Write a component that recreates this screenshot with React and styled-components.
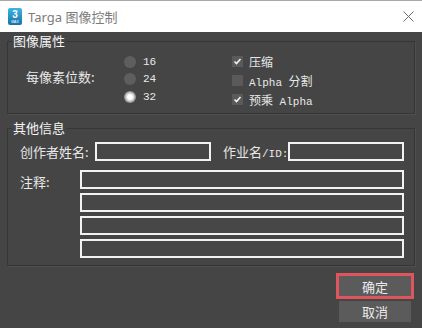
import React from 'react'
import styled, { createGlobalStyle } from 'styled-components'

const GlobalStyle = createGlobalStyle`
  html, body {
    margin: 0;
    padding: 0;
    background: #454545;
  }
  body {
    font-family: "Noto Sans CJK SC", "Noto Sans", sans-serif;
  }
`

const Window = styled.div`
  width: 422px;
  height: 328px;
  overflow: hidden;
  display: flex;
  flex-direction: column;
`

const TitleBar = styled.div`
  height: 32px;
  box-sizing: border-box;
  background: #fff;
  border-top: 1px solid #a8a8a8;
  display: flex;
  align-items: center;
  padding: 0 8px;
  gap: 6px;
`

const TitleText = styled.div`
  flex: 1;
  font-family: "Noto Sans", "Noto Sans CJK SC", sans-serif;
  font-size: 13px;
  color: #7c7c7c;
`

const Body = styled.div`
  flex: 1;
  background: #454545;
  padding: 1px 7px 0 7px;
  display: flex;
  flex-direction: column;
`

const Group = styled.fieldset`
  margin: ${p => p.$top || 0}px 0 0 0;
  padding: 0;
  min-width: 0;
  border: 1px solid #363636;
  box-shadow: 1px 1px 0 #4f4f4f;
`

const Legend = styled.legend`
  margin-left: 4px;
  padding: 0 1px;
  font-size: 13px;
  line-height: 16px;
  color: #f4f4f4;
`

const PropsGrid = styled.div`
  display: grid;
  grid-template-columns: 98px 108px 1fr;
  align-items: start;
  padding: 3px 0 4px 18px;
`

const Label = styled.div`
  font-size: 13px;
  color: #e8e8e8;
  white-space: nowrap;
  width: ${p => p.$w ? `${p.$w}px` : 'auto'};
  flex-shrink: 0;
`

const SideLabel = styled(Label)`
  align-self: center;
  padding-bottom: 8px;
`

const Column = styled.div`
  display: flex;
  flex-direction: column;
  padding-top: ${p => p.$top || 0}px;
`

const OptionRow = styled.div`
  height: ${p => p.$h}px;
  display: flex;
  align-items: center;
  gap: ${p => p.$gap}px;
  font-size: 12px;
  color: #e8e8e8;
`

const Mono = styled.span`
  font-family: "Liberation Mono", "DejaVu Sans Mono", monospace;
  font-size: 11px;
`

const Radio = styled.span`
  width: 12px;
  height: 12px;
  border-radius: 50%;
  flex-shrink: 0;
  background: ${p => p.$on
    ? 'radial-gradient(circle, #ffffff 0 28%, #d0d0d0 45%, #7a7a7a 75%, #5c5c5c 100%)'
    : '#5e5e5e'};
`

const Box = styled.span`
  width: 11px;
  height: 11px;
  flex-shrink: 0;
  background: #5a5a5a;
  display: flex;
  align-items: center;
  justify-content: center;
`

const FieldRow = styled.div`
  display: flex;
  align-items: center;
  padding: 6px 0 0 12px;
`

const NotesRow = styled.div`
  display: flex;
  align-items: flex-start;
  padding: 9px 0 7px 12px;
`

const NotesLabel = styled(Label)`
  padding-top: 2px;
`

const NotesStack = styled.div`
  display: flex;
  flex-direction: column;
  gap: 4px;
`

const Input = styled.div`
  box-sizing: border-box;
  width: ${p => p.$w}px;
  height: 19px;
  border: 2px solid #f2f2f2;
  background: #474747;
  flex-shrink: 0;
`

const Spacer = styled.div`
  width: ${p => p.$w}px;
  flex-shrink: 0;
`

const Buttons = styled.div`
  display: flex;
  flex-direction: column;
  align-items: flex-end;
  padding: 10px 4px 0 0;
  gap: 5px;
`

const Button = styled.div`
  width: 72px;
  height: ${p => p.$h}px;
  background: #5b5b5b;
  color: #ececec;
  font-size: 13px;
  display: flex;
  align-items: center;
  justify-content: center;
  box-shadow: ${p => p.$hl ? '0 0 0 3px #df555d' : 'none'};
`

const MaxIcon = () => (
  <svg width="14" height="17" viewBox="0 0 14 17">
    <defs>
      <linearGradient id="mx" x1="0" y1="0" x2="0" y2="1">
        <stop offset="0" stopColor="#3fb4e6" />
        <stop offset="1" stopColor="#1572a8" />
      </linearGradient>
    </defs>
    <rect x="0" y="0" width="14" height="17" rx="2" fill="url(#mx)" />
    <text x="7" y="10" textAnchor="middle" fontSize="10" fontWeight="bold" fill="#fff" fontFamily="Liberation Sans, sans-serif">3</text>
    <text x="7" y="15" textAnchor="middle" fontSize="3.5" fill="#fff" fontFamily="Liberation Sans, sans-serif">MAX</text>
  </svg>
)

const CloseIcon = () => (
  <svg width="11" height="11" viewBox="0 0 11 11">
    <path d="M0.5 0.5 L10.5 10.5 M10.5 0.5 L0.5 10.5" stroke="#6a6a6a" strokeWidth="1" />
  </svg>
)

const Check = ({ on }) => (
  <Box>
    {on && (
      <svg width="9" height="9" viewBox="0 0 9 9">
        <path d="M1.5 4.5 L3.5 6.5 L7.5 2" stroke="#f4f4f4" strokeWidth="1.6" fill="none" />
      </svg>
    )}
  </Box>
)

const depths = [
  { value: '16', on: false },
  { value: '24', on: false },
  { value: '32', on: true },
]

export default function App() {
  return (
    <Window>
      <GlobalStyle />
      <TitleBar>
        <MaxIcon />
        <TitleText>Targa 图像控制</TitleText>
        <CloseIcon />
      </TitleBar>
      <Body>
        <Group>
          <Legend>图像属性</Legend>
          <PropsGrid>
            <SideLabel>每像素位数:</SideLabel>
            <Column $top={1}>
              {depths.map(d => (
                <OptionRow key={d.value} $h={17.5} $gap={7}>
                  <Radio $on={d.on} />
                  <Mono>{d.value}</Mono>
                </OptionRow>
              ))}
            </Column>
            <Column>
              <OptionRow $h={19} $gap={6}>
                <Check on />
                <span>压缩</span>
              </OptionRow>
              <OptionRow $h={19} $gap={6}>
                <Check />
                <span><Mono>Alpha </Mono>分割</span>
              </OptionRow>
              <OptionRow $h={19} $gap={6}>
                <Check on />
                <span>预乘<Mono> Alpha</Mono></span>
              </OptionRow>
            </Column>
          </PropsGrid>
        </Group>

        <Group $top={6}>
          <Legend>其他信息</Legend>
          <FieldRow>
            <Label $w={75}>创作者姓名:</Label>
            <Input $w={116} />
            <Spacer $w={12} />
            <Label $w={65}>作业名<Mono>/ID:</Mono></Label>
            <Input $w={116} />
          </FieldRow>
          <NotesRow>
            <NotesLabel $w={60}>注释:</NotesLabel>
            <NotesStack>
              <Input $w={324} />
              <Input $w={324} />
              <Input $w={324} />
              <Input $w={324} />
            </NotesStack>
          </NotesRow>
        </Group>

        <Buttons>
          <Button $h={20} $hl>确定</Button>
          <Button $h={21}>取消</Button>
        </Buttons>
      </Body>
    </Window>
  )
}
